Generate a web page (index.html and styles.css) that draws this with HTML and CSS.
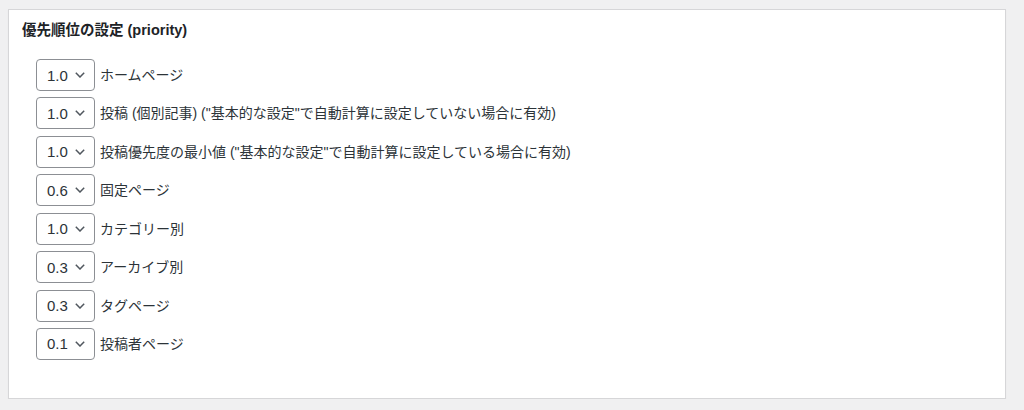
FILE: index.html
```html
<!DOCTYPE html>
<html lang="ja">
<head>
    <meta charset="UTF-8">
    <meta name="viewport" content="width=device-width, initial-scale=1.0">
    <title>優先順位の設定</title>
    <link rel="stylesheet" href="styles.css">
</head>
<body>
    <div class="postbox">
        <h3 class="postbox-title">優先順位の設定 (priority)</h3>
        <ul class="priority-list">
            <li class="priority-row">
                <span class="select">1.0<svg class="chevron" viewBox="0 0 10 6"><path d="M0.8 0.8 L5 5 L9.2 0.8"/></svg></span>
                <label>ホームページ</label>
            </li>
            <li class="priority-row">
                <span class="select">1.0<svg class="chevron" viewBox="0 0 10 6"><path d="M0.8 0.8 L5 5 L9.2 0.8"/></svg></span>
                <label>投稿 (個別記事) ("基本的な設定"で自動計算に設定していない場合に有効)</label>
            </li>
            <li class="priority-row">
                <span class="select">1.0<svg class="chevron" viewBox="0 0 10 6"><path d="M0.8 0.8 L5 5 L9.2 0.8"/></svg></span>
                <label>投稿優先度の最小値 ("基本的な設定"で自動計算に設定している場合に有効)</label>
            </li>
            <li class="priority-row">
                <span class="select">0.6<svg class="chevron" viewBox="0 0 10 6"><path d="M0.8 0.8 L5 5 L9.2 0.8"/></svg></span>
                <label>固定ページ</label>
            </li>
            <li class="priority-row">
                <span class="select">1.0<svg class="chevron" viewBox="0 0 10 6"><path d="M0.8 0.8 L5 5 L9.2 0.8"/></svg></span>
                <label>カテゴリー別</label>
            </li>
            <li class="priority-row">
                <span class="select">0.3<svg class="chevron" viewBox="0 0 10 6"><path d="M0.8 0.8 L5 5 L9.2 0.8"/></svg></span>
                <label>アーカイブ別</label>
            </li>
            <li class="priority-row">
                <span class="select">0.3<svg class="chevron" viewBox="0 0 10 6"><path d="M0.8 0.8 L5 5 L9.2 0.8"/></svg></span>
                <label>タグページ</label>
            </li>
            <li class="priority-row">
                <span class="select">0.1<svg class="chevron" viewBox="0 0 10 6"><path d="M0.8 0.8 L5 5 L9.2 0.8"/></svg></span>
                <label>投稿者ページ</label>
            </li>
        </ul>
    </div>
</body>
</html>
```

FILE: styles.css
```css
body {
    margin: 0;
    padding: 9px 0 0 8px;
    background-color: #f0f0f1;
    font-family: "Liberation Sans", "Noto Sans CJK JP", sans-serif;
    font-size: 14px;
    color: #2c3338;
}
.postbox {
    box-sizing: border-box;
    width: 998px;
    height: 390px;
    background: #fff;
    border: 1px solid #d6d6d8;
    box-shadow: 0 1px 1px rgba(0, 0, 0, 0.06);
    padding: 10px 13px 0 13px;
}
.postbox-title {
    margin: 0;
    font-size: 14.5px;
    line-height: 20px;
    font-weight: bold;
    color: #1d2327;
}
.priority-list {
    list-style: none;
    margin: 0;
    padding: 19px 0 0 14px;
    display: flex;
    flex-direction: column;
    gap: 6.43px;
}
.priority-row {
    display: flex;
    align-items: center;
    gap: 5px;
    height: 32px;
}
.select {
    box-sizing: border-box;
    width: 59px;
    height: 32px;
    display: flex;
    align-items: center;
    justify-content: space-between;
    padding: 0 9px 0 10px;
    border: 1px solid #8c8f94;
    border-radius: 4px;
    color: #2c3338;
    font-size: 15px;
}
.chevron {
    width: 10px;
    height: 6px;
    fill: none;
    stroke: #50575e;
    stroke-width: 1.5;
}
.priority-row label {
    line-height: 20px;
    color: #2c3338;
}
```
